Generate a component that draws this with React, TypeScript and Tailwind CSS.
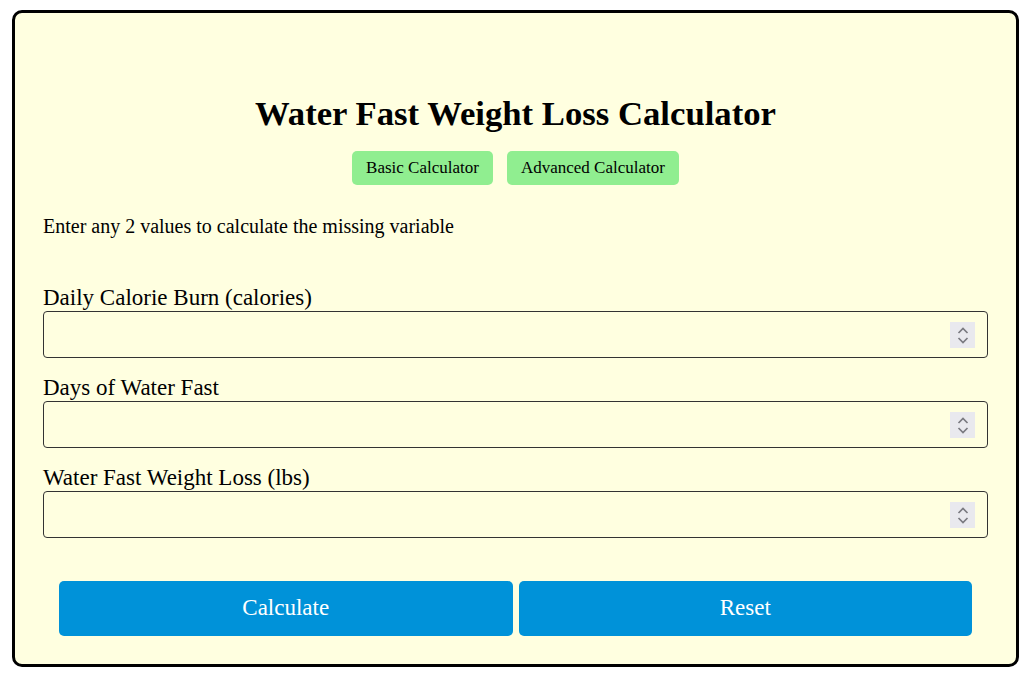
export default function App() {
  const fields = [
    'Daily Calorie Burn (calories)',
    'Days of Water Fast',
    'Water Fast Weight Loss (lbs)',
  ];

  return (
    <div className="min-h-screen bg-white pl-[12px] pr-[5px] pt-[10px] pb-[8px] font-['Liberation_Serif',serif] text-black">
      <div className="rounded-[10px] border-[3px] border-black bg-[#ffffe0] px-[28px] pt-[81px] pb-[28px]">
        <h1 className="text-center text-[34.7px] font-bold leading-[40px]">
          Water Fast Weight Loss Calculator
        </h1>

        <div className="mt-[17px] flex justify-center gap-[14px]">
          <button className="h-[34px] rounded-[5px] bg-[#90ee90] px-[14px] text-[17px]">
            Basic Calculator
          </button>
          <button className="h-[34px] rounded-[5px] bg-[#90ee90] px-[14px] text-[17px]">
            Advanced Calculator
          </button>
        </div>

        <p className="mt-[30px] text-[20px] leading-[23px]">
          Enter any 2 values to calculate the missing variable
        </p>

        <div className="mt-[47px] flex flex-col gap-[17px]">
          {fields.map((label) => (
            <label key={label} className="block">
              <span className="block text-[23px] leading-[26px]">{label}</span>
              <div className="relative">
                <input
                  type="number"
                  className="block h-[47px] w-full rounded-[4px] border border-[#333] bg-transparent px-[8px] text-[18px] outline-none [appearance:textfield] [&::-webkit-inner-spin-button]:appearance-none"
                />
                {/* spinner */}
                <div className="pointer-events-none absolute right-[13px] top-[11px] flex h-[26px] w-[25px] flex-col items-center justify-center gap-[3px] bg-[#e9e9ee]">
                  <svg width="12" height="7" viewBox="0 0 12 7" fill="none">
                    <path d="M1.5 6 L6 1.5 L10.5 6" stroke="#7a7a80" strokeWidth="1.7" />
                  </svg>
                  <svg width="12" height="7" viewBox="0 0 12 7" fill="none">
                    <path d="M1.5 1 L6 5.5 L10.5 1" stroke="#7a7a80" strokeWidth="1.7" />
                  </svg>
                </div>
              </div>
            </label>
          ))}
        </div>

        <div className="mt-[43px] flex gap-[6px] px-[16px]">
          <button className="h-[55px] flex-1 rounded-[5px] bg-[#0092d9] text-[23px] text-white">
            Calculate
          </button>
          <button className="h-[55px] flex-1 rounded-[5px] bg-[#0092d9] text-[23px] text-white">
            Reset
          </button>
        </div>
      </div>
    </div>
  );
}
